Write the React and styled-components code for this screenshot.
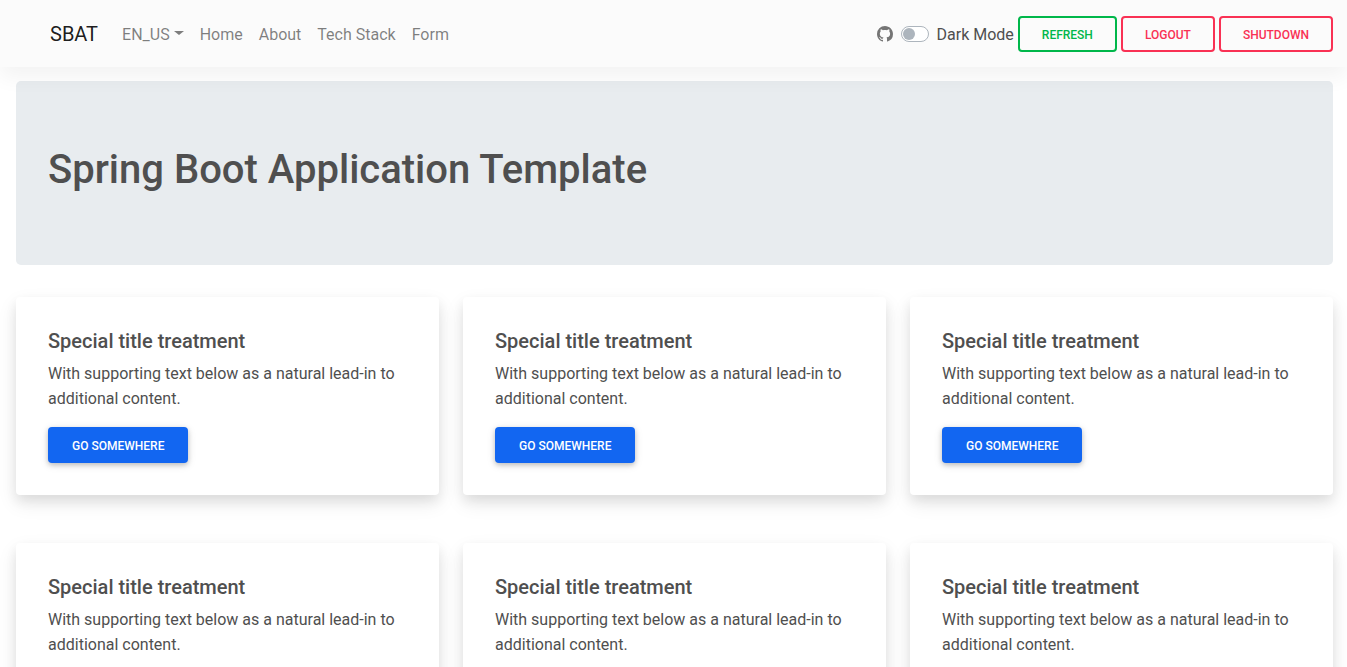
import React, { useState } from "react";
import styled, { createGlobalStyle } from "styled-components";
import { VscGithubInverted } from "react-icons/vsc";

const GlobalStyle = createGlobalStyle`
  *, *::before, *::after { box-sizing: border-box; }
  html { scrollbar-width: none; }
  body {
    margin: 0;
    background: #fff;
    color: #4f4f4f;
    font-family: Roboto, "Liberation Sans", sans-serif;
    font-size: 16px;
    line-height: 25px;
  }
`;

const Navbar = styled.header`
  position: relative;
  z-index: 1;
  display: flex;
  align-items: center;
  justify-content: space-between;
  padding: 16px 14px 15px 50px;
  background: #fbfbfb;
  box-shadow: 0 10px 20px 0 rgba(0, 0, 0, 0.05);
`;

const Nav = styled.nav`
  display: flex;
  align-items: center;
`;

const Brand = styled.a`
  margin-right: 16px;
  color: rgba(0, 0, 0, 0.9);
  font-size: 20px;
  text-decoration: none;
`;

const NavLink = styled.a`
  padding: 0 8px;
  color: rgba(0, 0, 0, 0.5);
  text-decoration: none;
`;

const LocaleButton = styled.button`
  display: flex;
  align-items: center;
  gap: 4px;
  padding: 0 8px;
  border: 0;
  background: none;
  color: rgba(0, 0, 0, 0.5);
  font: inherit;
  cursor: pointer;

  &::after {
    content: "";
    margin-bottom: 2px;
    border: 5px solid transparent;
    border-top: 4px solid currentColor;
    border-bottom: 0;
  }
`;

const Actions = styled.div`
  display: flex;
  align-items: center;
  gap: 4px;
`;

const IconLink = styled.a`
  display: flex;
  margin-right: 4px;
  color: #757575;
`;

const SwitchLabel = styled.label`
  display: flex;
  align-items: center;
  gap: 8px;
`;

const Switch = styled.input`
  appearance: none;
  display: flex;
  align-items: center;
  justify-content: ${(p) => (p.checked ? "flex-end" : "flex-start")};
  width: 28px;
  height: 16px;
  margin: 0;
  padding: 0 1px;
  border: 1px solid #adb5bd;
  border-radius: 8px;
  background: #fff;

  &::before {
    content: "";
    width: 12px;
    height: 12px;
    border-radius: 50%;
    background: #adb5bd;
  }
`;

const Button = styled.button`
  padding: 8px 22px 6px;
  border: 2px solid ${(p) => p.$color};
  border-radius: 4px;
  background: transparent;
  color: ${(p) => p.$color};
  font-family: inherit;
  font-size: 12px;
  font-weight: 500;
  line-height: 18px;
  text-transform: uppercase;
  cursor: pointer;
`;

const CardLink = styled.a`
  display: inline-block;
  padding: 10px 24px 8px;
  border-radius: 4px;
  background: #1266f1;
  box-shadow: 0 2px 5px 0 rgba(0, 0, 0, 0.2), 0 2px 10px 0 rgba(0, 0, 0, 0.1);
  color: #fff;
  font-size: 12px;
  font-weight: 500;
  line-height: 18px;
  text-decoration: none;
  text-transform: uppercase;
`;

const Main = styled.main`
  padding: 14px 14px 0 16px;
`;

const Hero = styled.section`
  margin-bottom: 32px;
  padding: 64px 32px 70px;
  border-radius: 5px;
  background: #e8ecef;
`;

const HeroTitle = styled.h1`
  margin: 0;
  font-size: 40px;
  font-weight: 500;
  line-height: 50px;
`;

const CardGrid = styled.div`
  display: grid;
  grid-template-columns: repeat(3, minmax(0, 1fr));
  gap: 48px 24px;
  padding-bottom: 48px;
`;

const Card = styled.article`
  padding: 32px;
  border-radius: 4px;
  background: #fff;
  box-shadow: 0 6px 12px 0 rgba(0, 0, 0, 0.07), 0 8px 20px 0 rgba(0, 0, 0, 0.09);
`;

const CardTitle = styled.h2`
  margin: 0 0 8px;
  font-size: 20px;
  font-weight: 500;
  line-height: 24px;
`;

const CardText = styled.p`
  margin: 0 0 16px;
`;

const links = ["Home", "About", "Tech Stack", "Form"];
const cards = [1, 2, 3, 4, 5, 6];

export default function App() {
  const [dark, setDark] = useState(false);
  return (
    <>
      <GlobalStyle />
      <Navbar>
        <Nav>
          <Brand href="#">SBAT</Brand>
          <LocaleButton type="button">EN_US</LocaleButton>
          {links.map((label) => (
            <NavLink href="#" key={label}>{label}</NavLink>
          ))}
        </Nav>
        <Actions>
          <IconLink href="#" aria-label="GitHub">
            <VscGithubInverted size={16} />
          </IconLink>
          <SwitchLabel>
            <Switch type="checkbox" checked={dark} onChange={(e) => setDark(e.target.checked)} />
            Dark Mode
          </SwitchLabel>
          <Button type="button" $color="#00b74a">Refresh</Button>
          <Button type="button" $color="#f93154">Logout</Button>
          <Button type="button" $color="#f93154">Shutdown</Button>
        </Actions>
      </Navbar>
      <Main>
        <Hero>
          <HeroTitle>Spring Boot Application Template</HeroTitle>
        </Hero>
        <CardGrid>
          {cards.map((id) => (
            <Card key={id}>
              <CardTitle>Special title treatment</CardTitle>
              <CardText>With supporting text below as a natural lead-in to additional content.</CardText>
              <CardLink href="#">Go somewhere</CardLink>
            </Card>
          ))}
        </CardGrid>
      </Main>
    </>
  );
}
